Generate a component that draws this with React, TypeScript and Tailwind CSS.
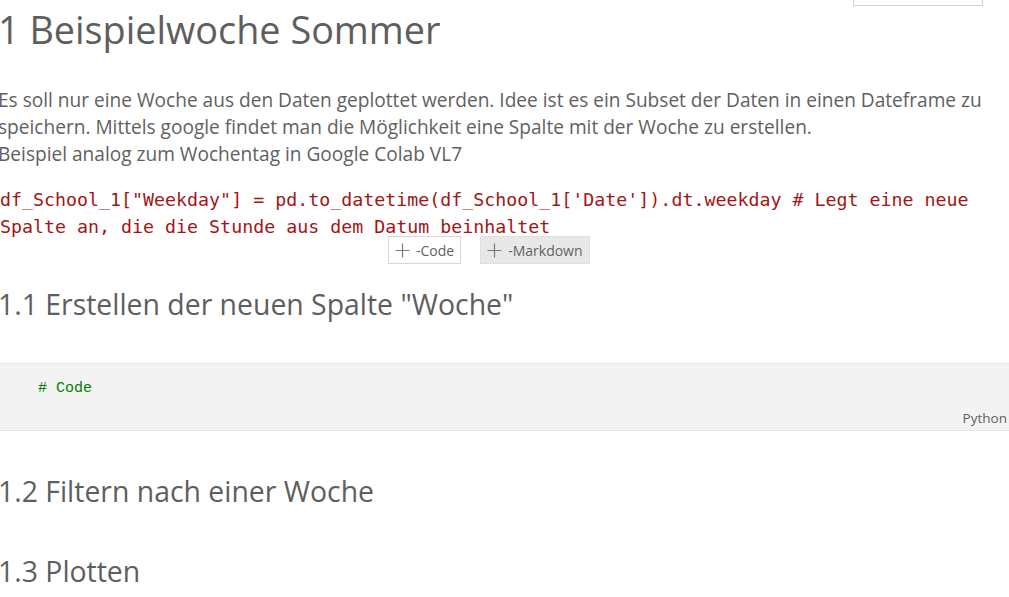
const mono = "font-['DejaVu_Sans_Mono','Liberation_Mono',monospace]";

const AddButton = ({ label, active }: { label: string; active?: boolean }) => (
  <div
    className={`flex items-center gap-[6px] h-[28px] px-[6px] border text-[14px] text-[#616161] ${
      active ? 'bg-[#e8e8e8] border-[#e0e0e0]' : 'bg-white border-[#d6d6d6]'
    }`}
  >
    <svg width="15" height="15" viewBox="0 0 15 15" className="text-[#7a7a7a]">
      <path d="M7.5 0.5v14M0.5 7.5h14" stroke="currentColor" strokeWidth="1.2" fill="none" />
    </svg>
    <span>{label}</span>
  </div>
);

export default function App() {
  return (
    <div className="relative w-[1009px] h-[597px] overflow-hidden bg-white text-[#616161] font-['Open_Sans','Noto_Sans',sans-serif]">
      <div className="absolute left-[853px] top-[-4px] w-[130px] h-[10px] border border-[#cfcfcf] bg-white" />

      <div className="-ml-[2px]">
        <h1 className="text-[37.8px] leading-[44px] pt-[8px] font-normal text-[#5e5e5e] whitespace-nowrap">
          1 Beispielwoche Sommer
        </h1>

        <p className="mt-[35px] text-[19.1px] leading-[27px] whitespace-nowrap">
          Es soll nur eine Woche aus den Daten geplottet werden. Idee ist es ein Subset der Daten in einen Dateframe zu
          <br />
          speichern. Mittels google findet man die Möglichkeit eine Spalte mit der Woche zu erstellen.
          <br />
          Beispiel analog zum Wochentag in Google Colab VL7
        </p>

        <pre className={`mt-[18px] pl-[2px] text-[18.3px] leading-[27px] text-[#a31515] whitespace-pre ${mono}`}>
          {`df_School_1["Weekday"] = pd.to_datetime(df_School_1['Date']).dt.weekday # Legt eine neue\nSpalte an, die die Stunde aus dem Datum beinhaltet`}
        </pre>
      </div>

      <div className="flex gap-[19px] pl-[388px] -mt-[4px]">
        <AddButton label="-Code" />
        <AddButton label="-Markdown" active />
      </div>

      <h2 className="-ml-[2px] mt-[22px] text-[28.4px] leading-[36px] font-normal text-[#5e5e5e] whitespace-nowrap">
        1.1 Erstellen der neuen Spalte "Woche"
      </h2>

      <div className="mt-[41px] h-[68px] bg-[#f3f3f3] border-y border-[#e6e6e6] flex flex-col justify-between">
        <div className="pl-[38px] pt-[15px] text-[15px] leading-[20px] text-[#008000] font-['Liberation_Mono','DejaVu_Sans_Mono',monospace]">
          # Code
        </div>
        <div className="self-end pr-[2px] pb-[3px] text-[13.5px] leading-[18px] text-[#616161]">Python</div>
      </div>

      <h2 className="-ml-[2px] mt-[42px] text-[28.4px] leading-[36px] font-normal text-[#5e5e5e] whitespace-nowrap">
        1.2 Filtern nach einer Woche
      </h2>

      <h2 className="-ml-[2px] mt-[44px] text-[28.4px] leading-[36px] font-normal text-[#5e5e5e] whitespace-nowrap">
        1.3 Plotten
      </h2>
    </div>
  );
}
